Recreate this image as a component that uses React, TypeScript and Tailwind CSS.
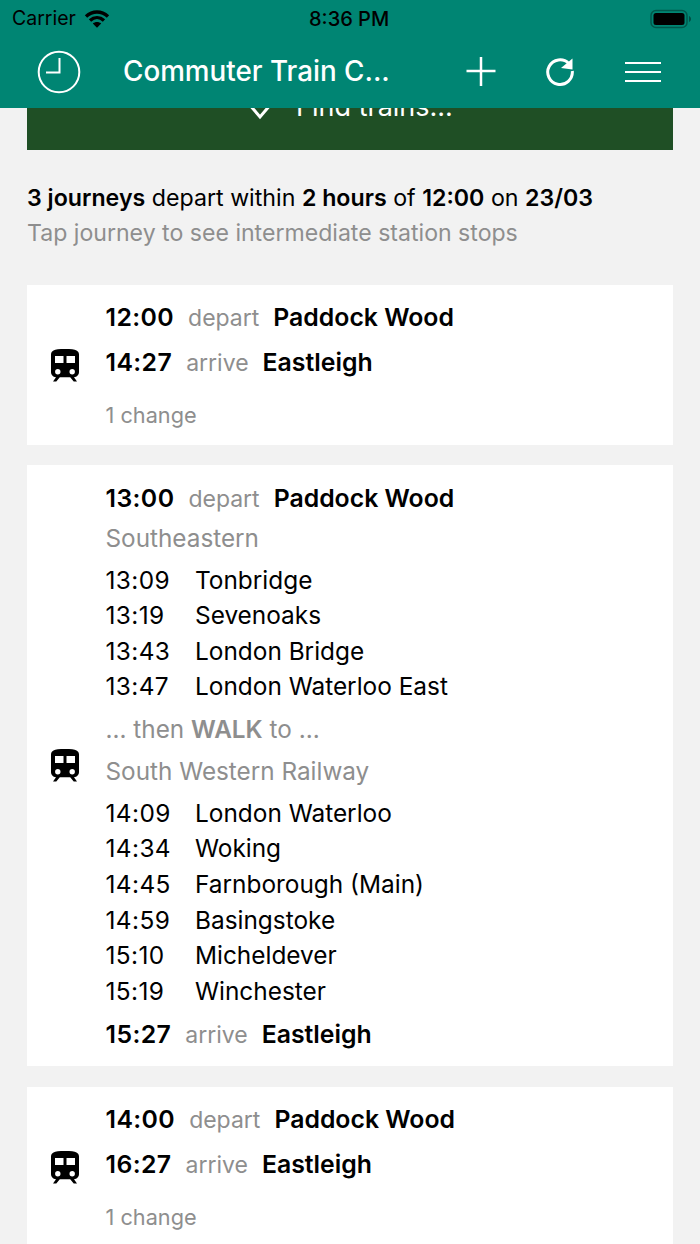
import React from 'react';

const font = "font-['Inter','Noto_Sans',sans-serif]";

const TrainIcon = () => (
  <svg width="28" height="33" viewBox="0 0 28 33" className="text-black">
    <path
      fill="currentColor"
      fillRule="evenodd"
      d="M14 0C8 0 4.500.4 2.500 1.500 1 2.300 0 3.600 0 5.500V23c0 2.800 2 5 5 5.200L2 32.500h3.300l3.500-4.300h10.400l3.500 4.300H26l-3-4.300c3-.2 5-2.400 5-5.200V5.500c0-1.900-1-3.200-2.500-4C23.500.4 20 0 14 0zM4 7h8.500v7H4zM15.500 7H24v7h-8.500zM6.800 25.400a2.700 2.700 0 1 1 0-5.400 2.700 2.700 0 0 1 0 5.400zm14.400 0a2.700 2.700 0 1 1 0-5.400 2.700 2.700 0 0 1 0 5.400z"
    />
  </svg>
);

const Times = ({ rows }: { rows: [string, string][] }) => (
  <div className="flex flex-col">
    {rows.map(([time, station]) => (
      <div key={time} className="flex h-[35.6px] items-center text-[24.4px] text-black">
        <span className="-ml-[0.5px] w-[89.5px] tracking-[0.4px]">{time}</span>
        <span>{station}</span>
      </div>
    ))}
  </div>
);

const Endpoint = ({ time, label, station }: { time: string; label: string; station: string }) => (
  <div className="flex h-[30px] items-center text-[24.8px]">
    <span className="-ml-[0.5px] font-semibold tracking-[0.4px] text-black">{time}</span>
    <span className="ml-[14px] text-[23px] text-[#8e8e8e]">{label}</span>
    <span className="ml-[14px] font-semibold text-black">{station}</span>
  </div>
);

const Operator = ({ children }: { children: React.ReactNode }) => (
  <div className="-ml-[0.5px] text-[24.3px] leading-[30px] text-[#8e8e8e]">{children}</div>
);

const Card = ({ children, className }: { children: React.ReactNode; className?: string }) => (
  <div className={`flex bg-white ${className ?? ''}`}>
    <div className="flex w-[79px] shrink-0 items-center justify-center pr-[3px]">
      <TrainIcon />
    </div>
    <div className="flex min-w-0 flex-1 flex-col">{children}</div>
  </div>
);

const App: React.FC = () => {
  return (
    <div className={`flex h-[1244px] w-[700px] flex-col overflow-hidden bg-[#f2f2f2] ${font}`}>
      <header className="relative z-10 h-[108px] shrink-0 bg-[#008573] text-white">
        <div className="flex h-[36px] items-center justify-between pl-[12px] pr-[8px] pt-[1px] text-black">
          <div className="flex items-center gap-[8px] text-[19.500px]">
            Carrier
            <svg width="26" height="19" viewBox="0 0 26 19">
              <path fill="none" stroke="#000" strokeWidth="3.400" d="M2 7.500c6.500-6 15.500-6 22 0M6 11.500c4.200-3.800 9.800-3.800 14 0" />
              <path fill="#000" d="M8.800 14.500c2.500-2 5.900-2 8.400 0L13 18.800z" />
            </svg>
          </div>
          <div className="absolute left-[309px] text-[20px] font-medium">8:36 PM</div>
          <svg width="42" height="20" viewBox="0 0 42 20">
            <rect x="1" y="1.500" width="36" height="17" rx="5" fill="none" stroke="#00000055" strokeWidth="1.500" />
            <rect x="3.500" y="4" width="31" height="12" rx="2.500" fill="#000" />
            <path d="M39 7v6c1.300-.5 2-1.700 2-3s-.7-2.500-2-3z" fill="#00000066" />
          </svg>
        </div>
        <div className="flex h-[71px] items-center">
          <svg width="44" height="44" viewBox="0 0 44 44" className="ml-[37px]">
            <circle cx="22" cy="22" r="20.300" fill="none" stroke="#fff" strokeWidth="2" />
            <path d="M22.500 8v14.500H9" fill="none" stroke="#fff" strokeWidth="2" />
          </svg>
          <div className="ml-[42px] mt-[1px] w-[320px] text-[27.800px] font-medium leading-none">Commuter Train C...</div>
          <svg width="32" height="32" viewBox="0 0 32 32" className="absolute left-[465px] top-[55px]">
            <path d="M16 2v29M1.500 16h29" stroke="#fff" strokeWidth="2.500" />
          </svg>
          <svg width="30" height="30" viewBox="0 0 30 30" className="absolute left-[545px] top-[56px]">
            <path d="M23.800 7.500A12.300 12.300 0 1 0 27.300 15" fill="none" stroke="#fff" strokeWidth="3" />
            <path d="M27.500 2.500v11L16 12z" fill="#fff" />
          </svg>
          <div className="absolute left-[625px] top-[62px] flex w-[36px] flex-col gap-[7px]">
            <div className="h-[2px] bg-white" />
            <div className="h-[2px] bg-white" />
            <div className="h-[2px] bg-white" />
          </div>
        </div>
      </header>

      <main className="flex flex-1 flex-col px-[27px]">
        <button className="-mt-[44px] flex h-[86px] shrink-0 items-center justify-center gap-[23px] bg-[#1f4f25] text-[27px] text-white">
          <svg width="26" height="18" viewBox="0 0 26 18" className="mt-[7px]">
            <path d="M2 2l11 13L24 2" fill="none" stroke="#fff" strokeWidth="3" />
          </svg>
          Find trains...
        </button>

        <div className="mt-[31px] text-[23.200px] leading-[35px] text-black">
          <div>
            <b className="font-semibold">3 journeys</b> depart within <b className="font-semibold">2 hours</b> of{' '}
            <b className="font-semibold">12:00</b> on <b className="font-semibold">23/03</b>
          </div>
          <div className="text-[23.100px] text-[#8e8e8e]">Tap journey to see intermediate station stops</div>
        </div>

        <Card className="mt-[34px] h-[160px] shrink-0">
          <div className="flex flex-col gap-[15px] pt-[18px]">
            <Endpoint time="12:00" label="depart" station="Paddock Wood" />
            <Endpoint time="14:27" label="arrive" station="Eastleigh" />
            <div className="-ml-[0.5px] mt-[9px] text-[21.700px] leading-[26px] text-[#8e8e8e]">1 change</div>
          </div>
        </Card>

        <Card className="mt-[20px] h-[601px] shrink-0">
          <div className="flex flex-col pt-[19px]">
            <Endpoint time="13:00" label="depart" station="Paddock Wood" />
            <div className="mt-[9px]">
              <Operator>Southeastern</Operator>
            </div>
            <div className="mt-[9px]">
              <Times
                rows={[
                  ['13:09', 'Tonbridge'],
                  ['13:19', 'Sevenoaks'],
                  ['13:43', 'London Bridge'],
                  ['13:47', 'London Waterloo East'],
                ]}
              />
            </div>
            <div className="mt-[10px]">
              <Operator>
                ... then <b className="font-semibold">WALK</b> to ...
              </Operator>
            </div>
            <div className="mt-[12px]">
              <Operator>South Western Railway</Operator>
            </div>
            <div className="mt-[9px]">
              <Times
                rows={[
                  ['14:09', 'London Waterloo'],
                  ['14:34', 'Woking'],
                  ['14:45', 'Farnborough (Main)'],
                  ['14:59', 'Basingstoke'],
                  ['15:10', 'Micheldever'],
                  ['15:19', 'Winchester'],
                ]}
              />
            </div>
            <div className="mt-[11px]">
              <Endpoint time="15:27" label="arrive" station="Eastleigh" />
            </div>
          </div>
        </Card>

        <Card className="mt-[21px] h-[160px] shrink-0">
          <div className="flex flex-col gap-[15px] pt-[18px]">
            <Endpoint time="14:00" label="depart" station="Paddock Wood" />
            <Endpoint time="16:27" label="arrive" station="Eastleigh" />
            <div className="-ml-[0.5px] mt-[9px] text-[21.700px] leading-[26px] text-[#8e8e8e]">1 change</div>
          </div>
        </Card>
      </main>
    </div>
  );
};

export default App;
